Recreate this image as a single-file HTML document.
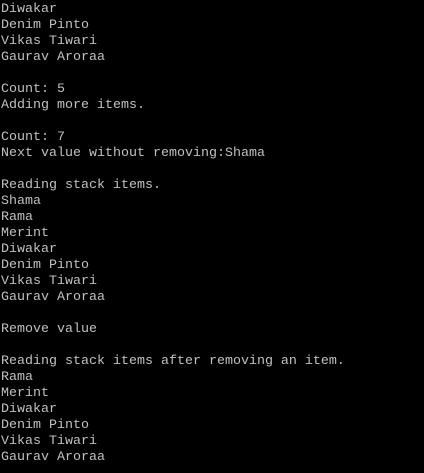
<!DOCTYPE html>
<html><head><style>
html,body{margin:0;padding:0;background:#000;width:424px;height:473px;overflow:hidden}
pre{margin:0;padding:2px 0 0 1px;font-family:"Liberation Mono",monospace;font-size:13.33px;line-height:16px;color:#c0c0c0}
</style></head><body><pre>Diwakar
Denim Pinto
Vikas Tiwari
Gaurav Aroraa

Count: 5
Adding more items.

Count: 7
Next value without removing:Shama

Reading stack items.
Shama
Rama
Merint
Diwakar
Denim Pinto
Vikas Tiwari
Gaurav Aroraa

Remove value

Reading stack items after removing an item.
Rama
Merint
Diwakar
Denim Pinto
Vikas Tiwari
Gaurav Aroraa</pre></body></html>
